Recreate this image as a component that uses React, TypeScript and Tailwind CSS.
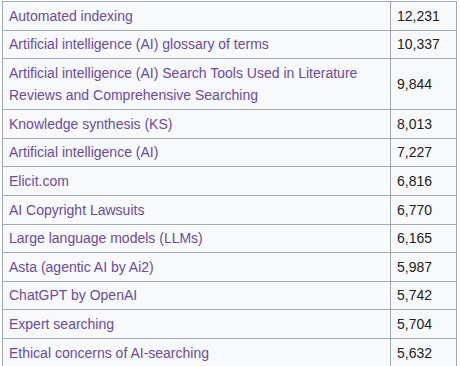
import React from 'react';

interface Row {
  title: string;
  views: string;
}

const rows: Row[] = [
  { title: 'Automated indexing', views: '12,231' },
  { title: 'Artificial intelligence (AI) glossary of terms', views: '10,337' },
  {
    title: 'Artificial intelligence (AI) Search Tools Used in Literature Reviews and Comprehensive Searching',
    views: '9,844',
  },
  { title: 'Knowledge synthesis (KS)', views: '8,013' },
  { title: 'Artificial intelligence (AI)', views: '7,227' },
  { title: 'Elicit.com', views: '6,816' },
  { title: 'AI Copyright Lawsuits', views: '6,770' },
  { title: 'Large language models (LLMs)', views: '6,165' },
  { title: 'Asta (agentic AI by Ai2)', views: '5,987' },
  { title: 'ChatGPT by OpenAI', views: '5,742' },
  { title: 'Expert searching', views: '5,704' },
  { title: 'Ethical concerns of AI-searching', views: '5,632' },
];

export default function App() {
  return (
    <div className="h-[366px] w-[460px] overflow-hidden bg-white pl-[2px] pt-[1px] font-['Liberation_Sans',Arial,sans-serif] text-[14px] leading-[22.4px] text-[#202122]">
      <table className="w-[455px] border-collapse bg-[#f8f9fa]">
        <tbody>
          {rows.map((r) => (
            <tr key={r.title}>
              <td className="w-[388px] border border-[#a2a9b1] px-[6px] py-[2.6px] align-middle">
                <a href="#" className="text-[#6b4ba1] no-underline">
                  {r.title}
                </a>
              </td>
              <td className="border border-[#a2a9b1] px-[6px] py-[2.6px] align-middle">{r.views}</td>
            </tr>
          ))}
        </tbody>
      </table>
    </div>
  );
}
